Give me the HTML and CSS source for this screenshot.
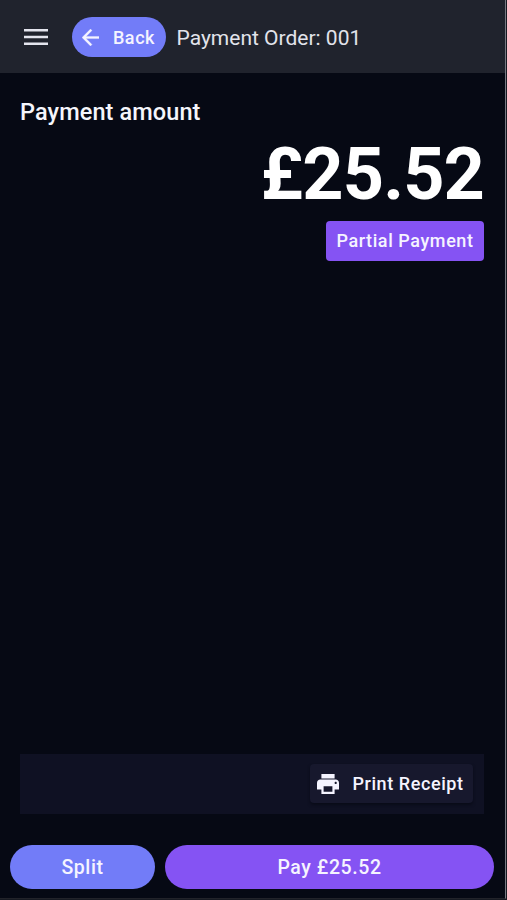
FILE: index.html
```html
<!DOCTYPE html>
<html lang="en">
<head>
<meta charset="utf-8">
<title>Payment Order: 001</title>
<link rel="stylesheet" href="styles.css">
</head>
<body>
<div class="screen">
  <header class="topbar">
    <svg class="menu-icon" viewBox="0 0 24 16" width="24" height="16"><path d="M0 0h24v2.5H0zM0 6.75h24v2.5H0zM0 13.5h24V16H0z" fill="currentColor"/></svg>
    <button class="btn back">
      <svg viewBox="4 4 16 16" width="17" height="17"><path d="M20 11H7.83l5.59-5.59L12 4l-8 8 8 8 1.41-1.41L7.83 13H20v-2z" fill="currentColor" stroke="currentColor" stroke-width=".3"/></svg>
      <span>Back</span>
    </button>
    <h1 class="title">Payment Order: 001</h1>
  </header>
  <main class="content">
    <h2 class="label">Payment amount</h2>
    <div class="amount">£25.52</div>
    <button class="btn partial">Partial Payment</button>
    <div class="receipt-bar">
      <button class="btn print">
        <svg viewBox="2 3 20 18" width="22" height="20"><path d="M19 8H5c-1.66 0-3 1.34-3 3v6h4v4h12v-4h4v-6c0-1.66-1.34-3-3-3zm-3 11H8v-5h8v5zm3-7c-.55 0-1-.45-1-1s.45-1 1-1 1 .45 1 1-.45 1-1 1zm-1-9H6v4h12V3z" fill="currentColor"/></svg>
        <span>Print Receipt</span>
      </button>
    </div>
  </main>
  <footer class="actions">
    <button class="btn split">Split</button>
    <button class="btn pay">Pay £25.52</button>
  </footer>
</div>
</body>
</html>
```
FILE: styles.css
```css
* { box-sizing: border-box; }
body {
  margin: 0;
  background: #171a22;
  font-family: Roboto, "Liberation Sans", sans-serif;
  color: #f5f6fc;
}
.screen {
  display: flex;
  flex-direction: column;
  width: 506px;
  height: 899px;
  background: #060914;
  border-right: 1px solid #777982;
  border-bottom: 1px solid #22232a;
}
.topbar {
  display: flex;
  align-items: center;
  height: 73px;
  padding: 1px 0 0 23.5px;
  background: #20232d;
}
.menu-icon { color: #e4e5ee; }
.btn {
  display: flex;
  align-items: center;
  justify-content: center;
  border: 0;
  padding: 0;
  color: #f5f4ff;
  font: 500 18px/20px Roboto, "Liberation Sans", sans-serif;
  letter-spacing: 0.58px;
  white-space: nowrap;
}
.back {
  width: 94px;
  height: 40px;
  margin-left: 24.5px;
  padding-right: 1px;
  gap: 14px;
  border-radius: 20px;
  background: #727cf8;
}
.back span { padding-top: 2px; }
.title {
  margin: 0 0 0 10.5px;
  padding-top: 2px;
  font-size: 21px;
  line-height: 24px;
  font-weight: 400;
  letter-spacing: 0;
  color: #e2e3eb;
}
.content {
  flex: 1;
  display: flex;
  flex-direction: column;
  align-items: flex-end;
  padding: 25px 21px 0 20px;
}
.label {
  align-self: flex-start;
  margin: 0;
  padding-top: 1px;
  font-size: 23.5px;
  line-height: 27px;
  font-weight: 500;
  letter-spacing: 0.1px;
}
.amount {
  height: 95px;
  font-size: 72px;
  line-height: 97px;
  font-weight: 700;
  letter-spacing: -0.9px;
  color: #fff;
}
.partial {
  width: 158px;
  height: 40px;
  border-radius: 4px;
  background: #8553f3;
}
.receipt-bar {
  display: flex;
  align-items: center;
  justify-content: flex-end;
  width: 464px;
  height: 60px;
  margin: auto 0 31px;
  padding: 0 11px 1px 0;
  background: #0f1123;
}
.print {
  width: 163px;
  height: 39px;
  padding-right: 2px;
  gap: 13px;
  border-radius: 4px;
  background: #17182d;
  box-shadow: 0 2px 3px #090b18;
}
.actions {
  display: flex;
  gap: 10px;
  padding: 0 11px 9px 10px;
}
.split, .pay {
  height: 44px;
  padding-top: 1px;
  border-radius: 22px;
  font-size: 19.5px;
}
.split { width: 145px; background: #727cf8; }
.pay { flex: 1; background: #8553f3; }
```
